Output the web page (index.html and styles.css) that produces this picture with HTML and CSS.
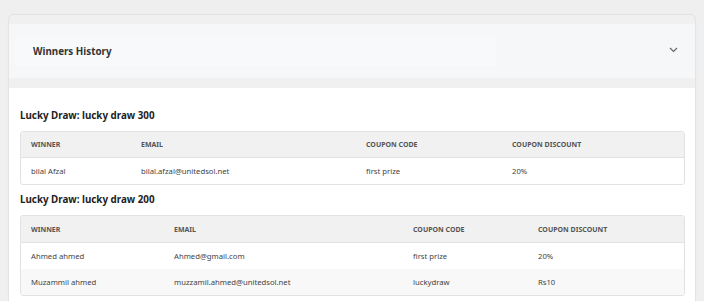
FILE: index.html
```html
<!DOCTYPE html>
<html>
<head>
<meta charset="utf-8">
<link rel="stylesheet" href="styles.css">
</head>
<body>
<div class="card">
  <div class="card-head">
    <div class="head-inner">
      <span class="head-title">Winners History</span>
    </div>
    <svg class="chev" width="9" height="6" viewBox="0 0 9 6"><path d="M1 1 L4.5 4.5 L8 1" fill="none" stroke="#666" stroke-width="1.2"/></svg>
  </div>
  <div class="gap"></div>
  <div class="content">
    <h3 class="draw-title">Lucky Draw: lucky draw 300</h3>
    <table class="winners t1">
      <colgroup><col class="c1"><col class="c2"><col class="c3"><col class="c4"></colgroup>
      <thead><tr><th>Winner</th><th>Email</th><th>Coupon Code</th><th>Coupon Discount</th></tr></thead>
      <tbody>
        <tr><td>bilal Afzal</td><td>bilal.afzal@unitedsol.net</td><td>first prize</td><td>20%</td></tr>
      </tbody>
    </table>
    <h3 class="draw-title">Lucky Draw: lucky draw 200</h3>
    <table class="winners t2">
      <colgroup><col class="c1"><col class="c2"><col class="c3"><col class="c4"></colgroup>
      <thead><tr><th>Winner</th><th>Email</th><th>Coupon Code</th><th>Coupon Discount</th></tr></thead>
      <tbody>
        <tr><td>Ahmed ahmed</td><td>Ahmed@gmail.com</td><td>first prize</td><td>20%</td></tr>
        <tr><td>Muzammil ahmed</td><td>muzzamil.ahmed@unitedsol.net</td><td>luckydraw</td><td>Rs10</td></tr>
      </tbody>
    </table>
  </div>
</div>
</body>
</html>
```

FILE: styles.css
```css
html, body {
  margin: 0;
  background: #efefef;
  font-family: "Noto Sans", "Open Sans", sans-serif;
  color: #333;
}
body {
  padding: 14px 8px 0 8px;
  height: 301px;
  box-sizing: border-box;
  overflow: hidden;
}
.card {
  background: #f0f0f0;
  border: 1px solid #e4e4e4;
  border-bottom: none;
  border-radius: 6px 6px 0 0;
  padding-top: 9px;
  box-shadow: 0 0 2px rgba(0,0,0,0.04);
}
.card-head {
  position: relative;
  background: #f6f7f8;
  height: 54px;
  display: flex;
  align-items: center;
  padding: 0 6px;
}
.head-inner {
  background: #f8f9fa;
  height: 29px;
  width: 481px;
  display: flex;
  align-items: center;
  padding-left: 18px;
  box-sizing: border-box;
}
.head-title {
  font-weight: 700;
  font-size: 9.8px;
  color: #333;
}
.chev {
  position: absolute;
  right: 17px;
  top: 23px;
}
.gap {
  height: 10px;
}
.content {
  background: #fff;
  padding: 20px 10px 8px 11px;
}
.draw-title {
  margin: 0 0 7px 0;
  font-size: 9.8px;
  line-height: 16px;
  font-weight: 700;
  color: #222;
}
.winners {
  width: 665px;
  border-collapse: separate;
  border-spacing: 0;
  border: 1px solid #e2e2e2;
  border-radius: 3px;
  table-layout: fixed;
  margin-bottom: 7px;
  overflow: hidden;
}
.winners th {
  background: #f1f1f1;
  text-align: left;
  font-size: 7px;
  font-weight: 700;
  text-transform: uppercase;
  color: #555;
  height: 25px;
  padding: 0 0 0 10px;
  border-bottom: 1px solid #e2e2e2;
}
.t2 th { height: 26px; }
.winners td {
  font-size: 7.7px;
  color: #444;
  height: 26px;
  padding: 0 0 0 10px;
}
.winners tbody tr:nth-child(even) td {
  background: #f8f8f8;
}
.t1 .c1 { width: 110px; }
.t1 .c2 { width: 225px; }
.t1 .c3 { width: 146px; }
.t1 .c4 { width: auto; }
.t2 .c1 { width: 143px; }
.t2 .c2 { width: 239px; }
.t2 .c3 { width: 125px; }
.t2 .c4 { width: auto; }
```
